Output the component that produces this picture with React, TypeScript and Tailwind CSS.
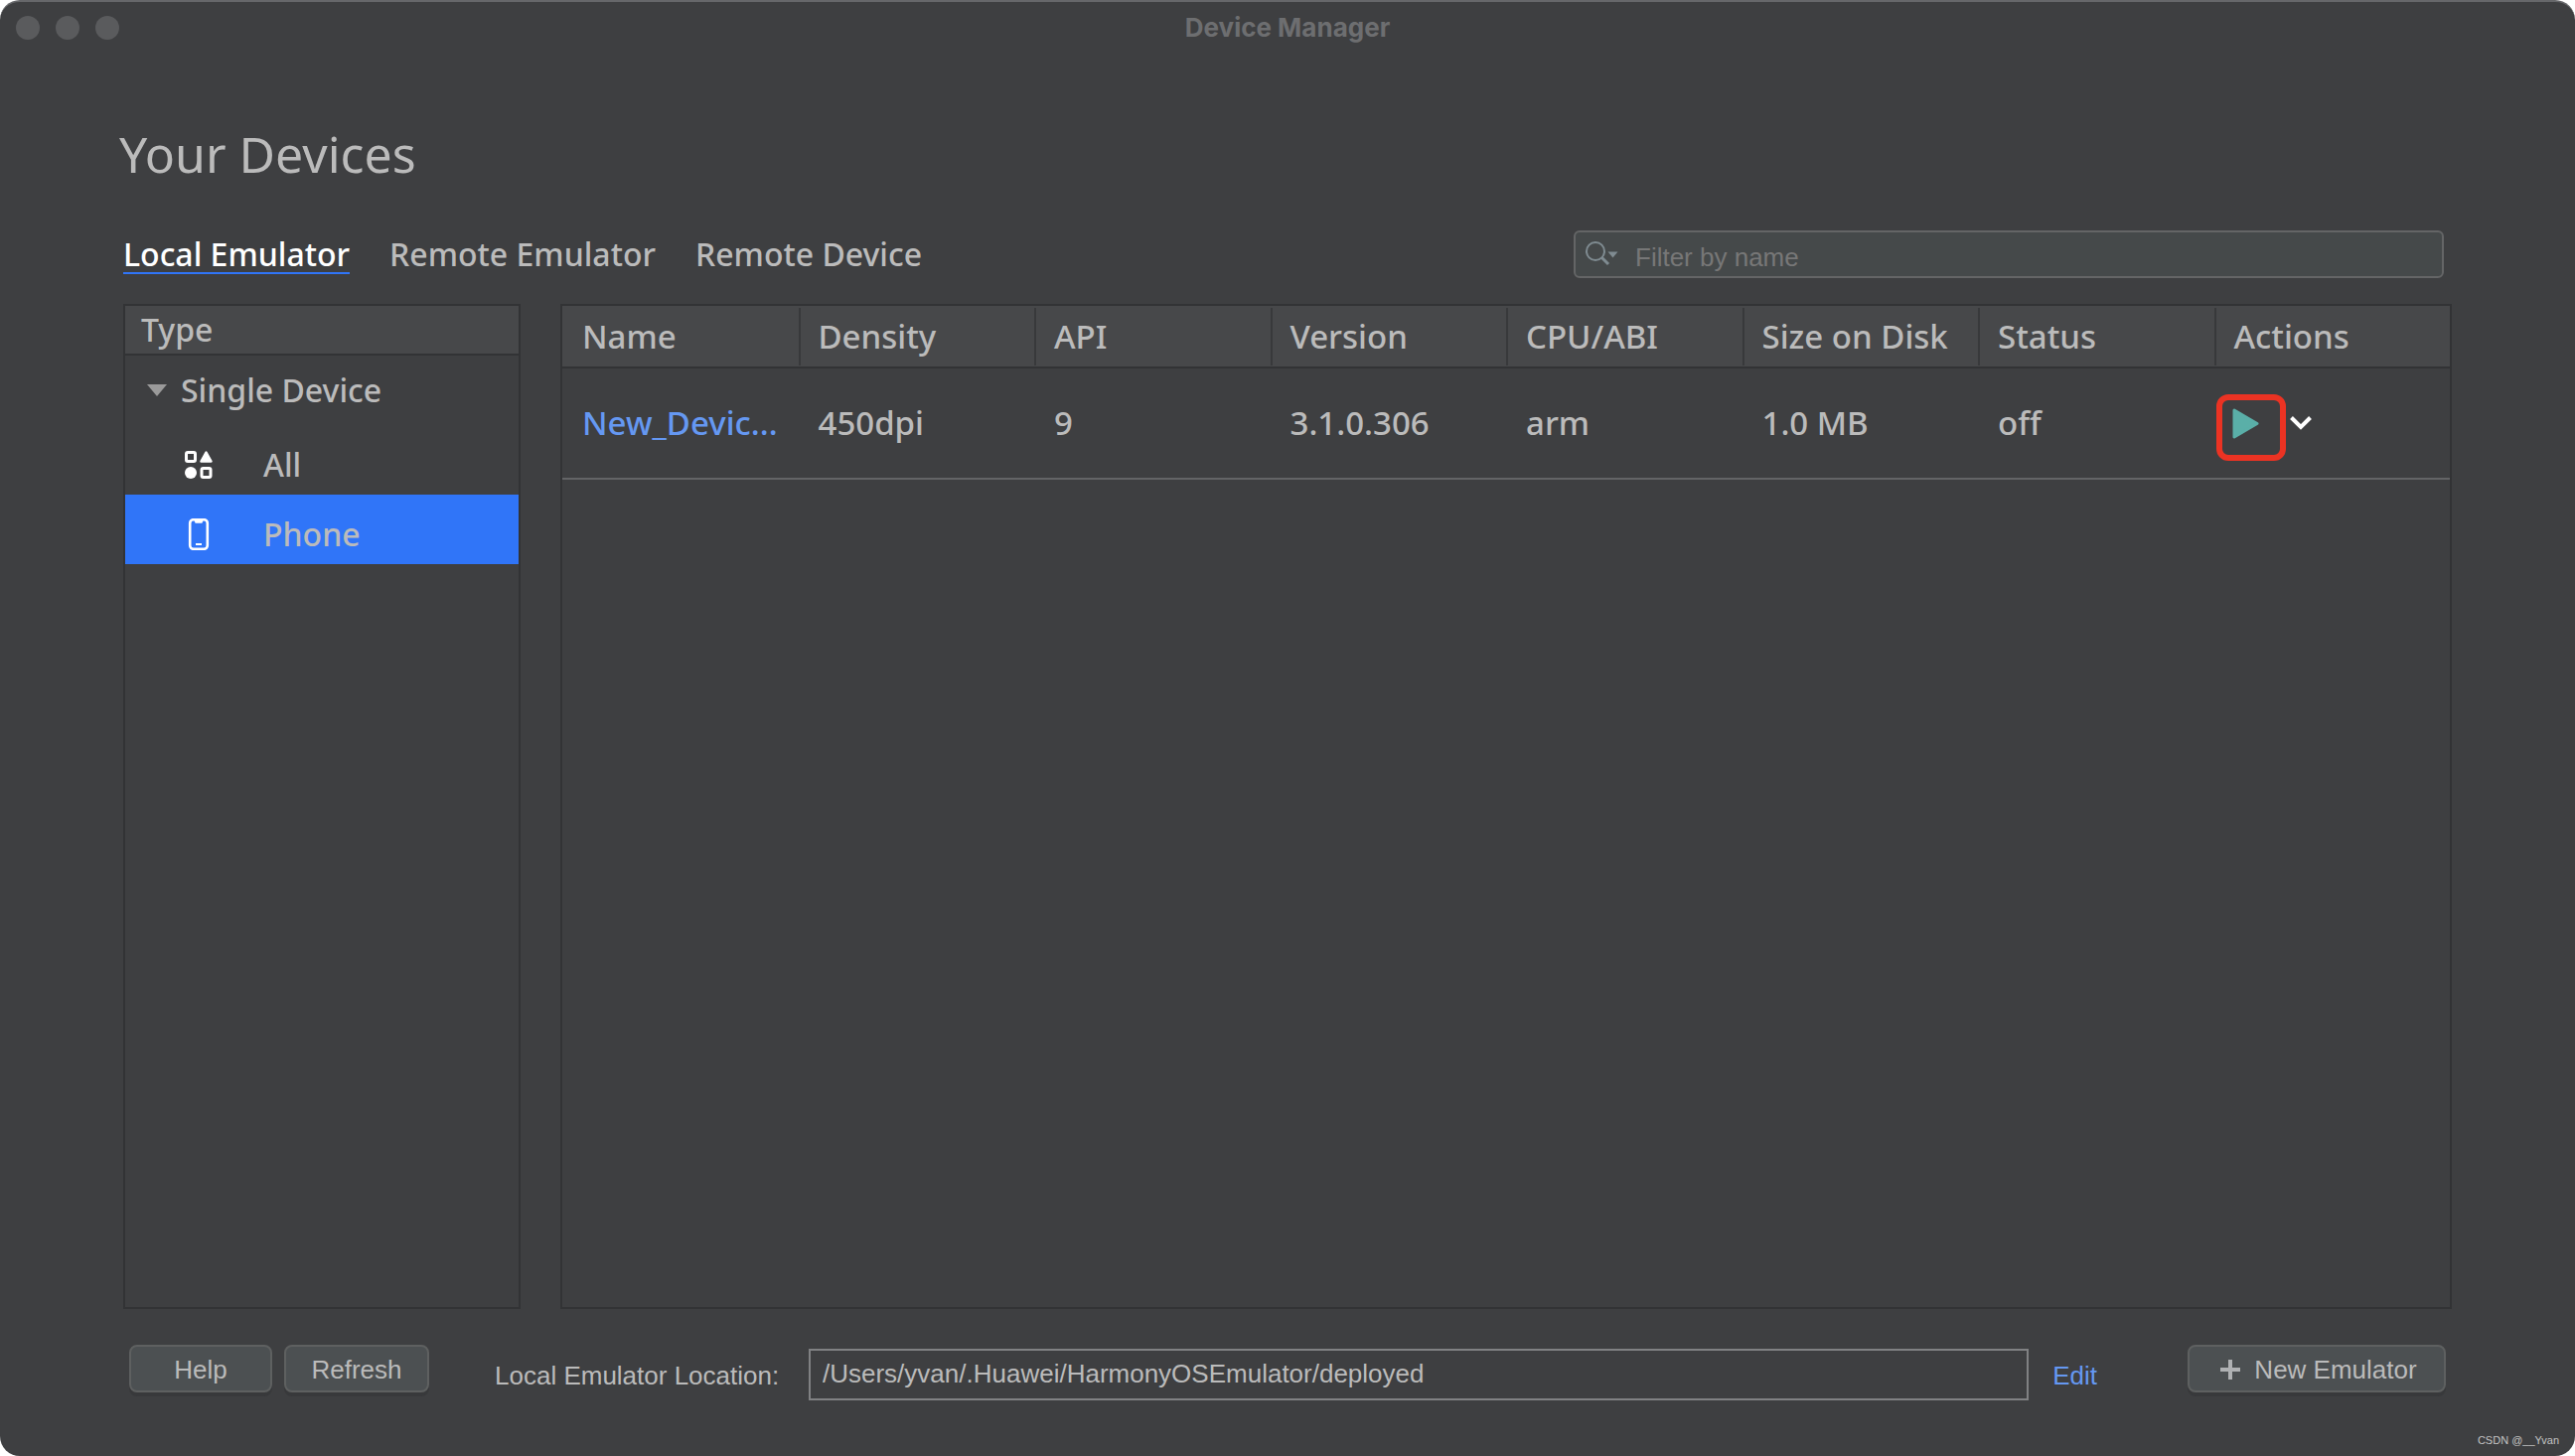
import { useState } from 'react';

interface Device {
  name: string;
  density: string;
  api: string;
  version: string;
  abi: string;
  size: string;
  status: string;
}

const TABS = ['Local Emulator', 'Remote Emulator', 'Remote Device'];

const COLUMNS = ['Name', 'Density', 'API', 'Version', 'CPU/ABI', 'Size on Disk', 'Status', 'Actions'];

const DEVICES: Device[] = [
  {
    name: 'New_Devic...',
    density: '450dpi',
    api: '9',
    version: '3.1.0.306',
    abi: 'arm',
    size: '1.0 MB',
    status: 'off',
  },
];

function AllIcon() {
  return (
    <svg className="w-[30px] h-[30px]" viewBox="0 0 30 30" fill="none">
      <rect x="2.5" y="2.5" width="9" height="9" rx="1.5" stroke="#fff" strokeWidth="3" />
      <rect x="18" y="18.5" width="9" height="9" rx="1.5" stroke="#fff" strokeWidth="3" />
      <circle cx="7" cy="23" r="6" fill="#fff" />
      <path d="M22.5 2.5L27.5 11.5H17.5Z" fill="#fff" stroke="#fff" strokeWidth="2.5" strokeLinejoin="round" />
    </svg>
  );
}

function PhoneIcon() {
  return (
    <svg className="w-[30px] h-8" viewBox="0 0 30 32" fill="none">
      <rect x="6.2" y="1.2" width="17.6" height="29.6" rx="3.5" stroke="#fff" strokeWidth="2.6" />
      <path d="M10.5 2H19.5L18.4 4.8H11.6Z" fill="#fff" />
      <path d="M12 26H18" stroke="#fff" strokeWidth="2" />
    </svg>
  );
}

function TitleBar() {
  return (
    <header className="grid grid-cols-[1fr_auto_1fr] items-center h-[52px] px-4">
      <div className="flex gap-4">
        <button className="w-6 h-6 rounded-full bg-[#5a5b5d]" aria-label="Close" />
        <button className="w-6 h-6 rounded-full bg-[#5a5b5d]" aria-label="Minimize" />
        <button className="w-6 h-6 rounded-full bg-[#5a5b5d]" aria-label="Zoom" />
      </div>
      <span className="font-['Inter',sans-serif] font-bold text-[26px] leading-8 text-[#6d6e70]">
        Device Manager
      </span>
    </header>
  );
}

interface SearchBoxProps {
  value: string;
  onChange: (value: string) => void;
}

function SearchBox({ value, onChange }: SearchBoxProps) {
  return (
    <label className="w-[876px] h-12 flex items-center pl-2.5 pr-4 bg-[#45494a] border-2 border-[#646566] rounded-md">
      <svg className="w-9 h-7 shrink-0" viewBox="0 0 36 28" fill="none">
        <circle cx="10" cy="11" r="9" stroke="#7f8b91" strokeWidth="2" />
        <path d="M16.5 17.5L23 24" stroke="#7f8b91" strokeWidth="3" />
        <path d="M22.5 11.5H32.5L27.5 17.5Z" fill="#7f8b91" />
      </svg>
      <input
        type="text"
        value={value}
        onChange={(e) => onChange(e.target.value)}
        placeholder="Filter by name"
        aria-label="Filter by name"
        className="flex-1 h-11 ml-3.5 pt-1.5 bg-transparent font-['Liberation_Sans',sans-serif] text-[26px] text-[#bbbbbb] placeholder-[#777777] outline-none"
      />
    </label>
  );
}

interface TypePanelProps {
  selected: string;
  onSelect: (type: string) => void;
}

function TypePanel({ selected, onSelect }: TypePanelProps) {
  const types = [
    { name: 'All', icon: <AllIcon /> },
    { name: 'Phone', icon: <PhoneIcon /> },
  ];

  return (
    <aside className="w-[400px] shrink-0 border-2 border-[#323335] text-[32px] leading-[48px] font-medium">
      <h2 className="h-[50px] px-4 bg-[#47484a] border-b-2 border-[#323335]">Type</h2>
      <button className="w-full h-[70px] pl-[22px] flex items-center gap-3.5 text-left">
        <svg className="w-5 h-3" viewBox="0 0 20 12">
          <path d="M0 0H20L10 12Z" fill="#9a9a9a" />
        </svg>
        Single Device
      </button>
      {types.map((type) => (
        <button
          key={type.name}
          onClick={() => onSelect(type.name)}
          className={`w-full h-[70px] pl-[59px] pt-2.5 flex items-center gap-[50px] text-left ${
            selected === type.name ? 'bg-[#3075f8]' : ''
          }`}
        >
          {type.icon}
          {type.name}
        </button>
      ))}
    </aside>
  );
}

function DeviceTable({ devices }: { devices: Device[] }) {
  return (
    <section className="flex-1 border-2 border-[#323335]">
      <table className="w-full table-fixed border-collapse text-[33px] leading-[58px] text-left font-medium">
        <thead>
          <tr className="h-[62px] bg-[#47484a] border-b-2 border-[#323335]">
            {COLUMNS.map((column) => (
              <th key={column} className="group p-0 font-medium whitespace-nowrap">
                <div className="pl-[18px] border-l-2 border-[#38393b] group-first:border-transparent">{column}</div>
              </th>
            ))}
          </tr>
        </thead>
        <tbody>
          {devices.map((device) => (
            <tr key={device.name} className="h-28 border-b-2 border-[#636466] whitespace-nowrap">
              <td className="p-0 pl-5">
                <a href="#device" className="text-[#6598f2]">{device.name}</a>
              </td>
              <td className="p-0 pl-5">{device.density}</td>
              <td className="p-0 pl-5">{device.api}</td>
              <td className="p-0 pl-5">{device.version}</td>
              <td className="p-0 pl-5">{device.abi}</td>
              <td className="p-0 pl-5">{device.size}</td>
              <td className="p-0 pl-5">{device.status}</td>
              <td className="p-0 pl-[18px]">
                <div className="flex items-center gap-[30px]">
                  <button className="relative" aria-label="Start emulator">
                    <svg className="w-[27px] h-[31px]" viewBox="0 0 27 31">
                      <path
                        d="M2 2L25 15.5L2 29Z"
                        fill="#5aafa8"
                        stroke="#5aafa8"
                        strokeWidth="3"
                        strokeLinejoin="round"
                      />
                    </svg>
                    {/* Highlight around the start action */}
                    <span className="absolute -left-4 -top-3.5 w-[70px] h-[67px] border-[6px] border-[#eb3323] rounded-xl" />
                  </button>
                  <button aria-label="More actions">
                    <svg className="w-6 h-4" viewBox="0 0 24 16" fill="none">
                      <path d="M2.5 2.5L12 12L21.5 2.5" stroke="#fff" strokeWidth="4" />
                    </svg>
                  </button>
                </div>
              </td>
            </tr>
          ))}
        </tbody>
      </table>
    </section>
  );
}

function Footer() {
  const button =
    'h-12 flex items-center justify-center pt-0.5 bg-[#4c5052] border-2 border-[#5e6060] rounded-lg shadow-[0_4px_0_#38393b]';

  return (
    <footer className="flex items-start px-1.5 pt-9 pb-14 font-['Liberation_Sans',sans-serif] text-[26px]">
      <button className={`${button} w-36`}>Help</button>
      <button className={`${button} w-[146px] ml-3`}>Refresh</button>
      <div className="flex-1 flex items-center ml-[66px] mt-1">
        <label htmlFor="location" className="w-[316px] pt-0.5">Local Emulator Location:</label>
        <input
          id="location"
          type="text"
          readOnly
          value="/Users/yvan/.Huawei/HarmonyOSEmulator/deployed"
          className="flex-1 h-[52px] px-3 pb-0.5 bg-transparent border-2 border-[#808183] outline-none"
        />
        <a href="#edit" className="ml-6 mr-[91px] pt-0.5 text-[#6598f2]">Edit</a>
      </div>
      <button className={`${button} w-[260px] gap-3.5 pl-1`}>
        <svg className="w-5 h-5" viewBox="0 0 20 20">
          <path d="M10 0V20M0 10H20" stroke="#afb1b3" strokeWidth="4" />
        </svg>
        New Emulator
      </button>
    </footer>
  );
}

export default function App() {
  const [tab, setTab] = useState('Local Emulator');
  const [type, setType] = useState('Phone');
  const [filter, setFilter] = useState('');

  const devices = DEVICES.filter((d) => d.name.toLowerCase().includes(filter.toLowerCase()));

  return (
    <div className="bg-white">
      <div className="relative min-h-screen flex flex-col overflow-hidden rounded-[20px] border-t-2 border-[#66676a] bg-[#3e3f41] font-['Noto_Sans',sans-serif] text-[#bbbbbb]">
        <TitleBar />
        <main className="flex-1 flex flex-col px-[124px]">
          <h1 className="-ml-1 mt-[69px] text-[50px] leading-[64px]">Your Devices</h1>

          <div className="flex items-center justify-between mt-[45px] pr-2">
            <nav className="flex gap-10 pt-px">
              {TABS.map((name) => (
                <button
                  key={name}
                  onClick={() => setTab(name)}
                  className={`text-[32px] leading-9 font-medium border-b-2 ${
                    tab === name ? 'text-white border-[#3075f8]' : 'border-transparent'
                  }`}
                >
                  {name}
                </button>
              ))}
            </nav>
            <SearchBox value={filter} onChange={setFilter} />
          </div>

          <div className="flex-1 flex gap-10 mt-[26px]">
            <TypePanel selected={type} onSelect={setType} />
            <DeviceTable devices={devices} />
          </div>

          <Footer />
        </main>
        <span className="absolute right-4 bottom-2 font-['Liberation_Sans',sans-serif] text-[11px] leading-4 text-[#c4c4c4]">
          CSDN @__Yvan
        </span>
      </div>
    </div>
  );
}
